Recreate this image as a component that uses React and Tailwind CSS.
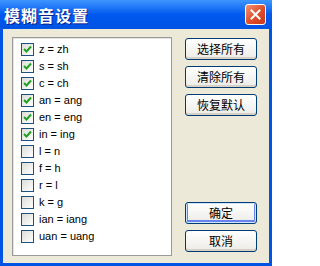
import React from 'react';

const options = [
    { label: 'z = zh', checked: true },
    { label: 's = sh', checked: true },
    { label: 'c = ch', checked: true },
    { label: 'an = ang', checked: true },
    { label: 'en = eng', checked: true },
    { label: 'in = ing', checked: true },
    { label: 'l = n', checked: false },
    { label: 'f = h', checked: false },
    { label: 'r = l', checked: false },
    { label: 'k = g', checked: false },
    { label: 'ian = iang', checked: false },
    { label: 'uan = uang', checked: false },
];

const cjk = { fontFamily: '"Noto Sans CJK SC", "Liberation Sans", sans-serif' };

function CheckBox({ checked }) {
    return (
        <span className="w-[13px] h-[13px] border border-[#1c5180] bg-gradient-to-br from-[#dcdcd7] to-white flex items-center justify-center shrink-0">
            {checked && (
                <svg width="9" height="9" viewBox="0 0 9 9">
                    <path d="M1 4 L3.5 6.5 L8 1.5" fill="none" stroke="#21a121" strokeWidth="2" />
                </svg>
            )}
        </span>
    );
}

function XpButton({ children, isDefault }) {
    return (
        <button
            className={`h-[22px] w-[72px] rounded-[3px] border border-[#003c74] bg-gradient-to-b from-white to-[#ecebe6] text-[12px] text-black leading-none ${isDefault ? 'shadow-[inset_0_0_0_1px_#cee7ff,inset_0_-1px_0_2px_#6982ee]' : 'shadow-[inset_0_-2px_0_#d6d0c5]'}`}
            style={cjk}
        >
            {children}
        </button>
    );
}

export default function App() {
    return (
        <div className="w-[272px] h-[266px] flex flex-col bg-[#0054e3] overflow-hidden" style={{ fontFamily: '"Liberation Sans", sans-serif' }}>
            {/* title bar */}
            <div className="h-[29px] shrink-0 flex items-center justify-between pl-[4px] pr-[6px] bg-gradient-to-b from-[#3d95ff] via-[#0058ee] to-[#0054e3]">
                <span className="text-white font-bold text-[16px] tracking-[1px] [text-shadow:1px_1px_0_#0a1e8c]" style={cjk}>模糊音设置</span>
                <span className="w-[21px] h-[21px] rounded-[3px] border border-white bg-gradient-to-br from-[#f09272] via-[#e0502d] to-[#c8381b] flex items-center justify-center">
                    <svg width="11" height="11" viewBox="0 0 11 11">
                        <path d="M1.5 1.5 L9.5 9.5 M9.5 1.5 L1.5 9.5" stroke="white" strokeWidth="2" strokeLinecap="square" />
                    </svg>
                </span>
            </div>

            {/* body */}
            <div className="flex-1 mx-[3px] mb-[3px] bg-[#ece9d8] flex gap-[13px] pl-[9px] pr-[12px] pt-[8px]">
                <div className="w-[160px] h-[219px] border border-[#9b9b9b] bg-white pt-[3px] pl-[8px] shadow-[inset_1px_1px_0_#e3e3e3]">
                    {options.map((opt) => (
                        <div key={opt.label} className="h-[17px] flex items-center gap-[5px] text-[11px] text-black">
                            <CheckBox checked={opt.checked} />
                            <span>{opt.label}</span>
                        </div>
                    ))}
                </div>
                <div className="flex flex-col mt-[1px]">
                    <div className="flex flex-col gap-[6px]">
                        <XpButton>选择所有</XpButton>
                        <XpButton>清除所有</XpButton>
                        <XpButton>恢复默认</XpButton>
                    </div>
                    <div className="flex flex-col gap-[6px] mt-[86px]">
                        <XpButton isDefault>确定</XpButton>
                        <XpButton>取消</XpButton>
                    </div>
                </div>
            </div>
        </div>
    );
}
